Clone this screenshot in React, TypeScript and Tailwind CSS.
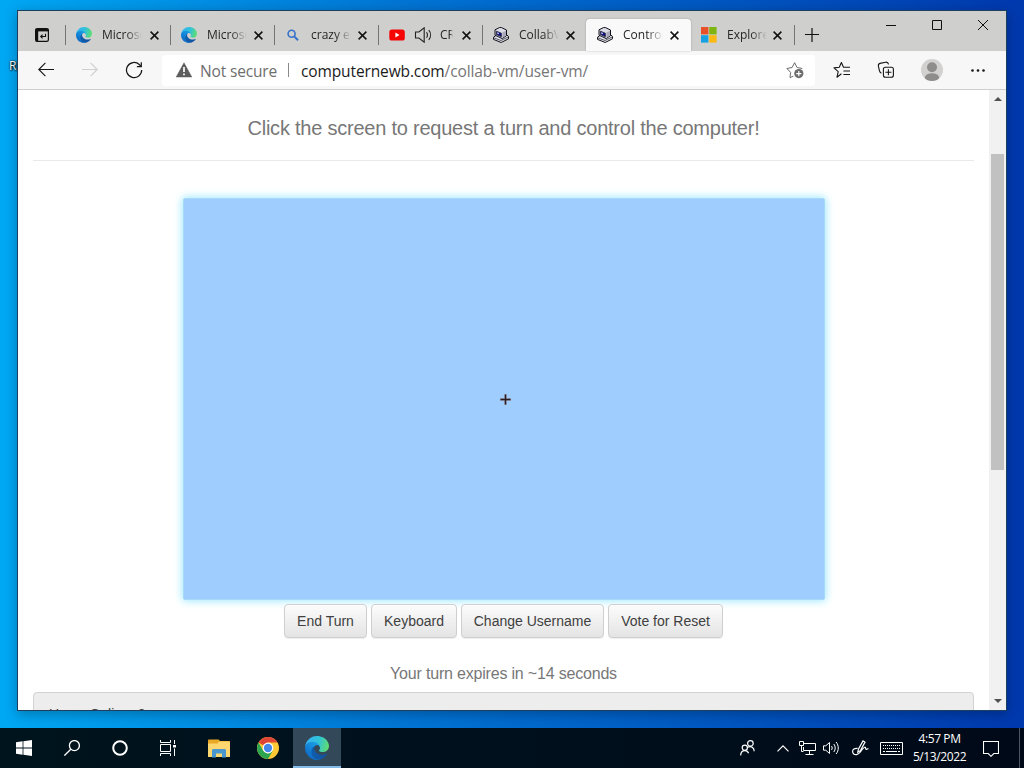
import type { ReactNode } from 'react';

type Tab = {
  title: string;
  icon: ReactNode;
  width: string;
  audible?: boolean;
  active?: boolean;
  divider?: boolean;
};

function EdgeLogo({ id, className }: { id: string; className: string }) {
  return (
    <svg className={className} viewBox="0 0 256 256">
      <defs>
        <linearGradient id={`${id}-a`} x1="60" y1="177" x2="236" y2="177" gradientUnits="userSpaceOnUse">
          <stop offset="0" stopColor="#0f5fae" />
          <stop offset="1" stopColor="#1250a0" />
        </linearGradient>
        <linearGradient id={`${id}-b`} x1="150" y1="90" x2="45" y2="220" gradientUnits="userSpaceOnUse">
          <stop offset="0" stopColor="#1b9de2" />
          <stop offset="0.4" stopColor="#158cdc" />
          <stop offset="1" stopColor="#0f6cc6" />
        </linearGradient>
        <linearGradient id={`${id}-c`} x1="20" y1="60" x2="250" y2="120" gradientUnits="userSpaceOnUse">
          <stop offset="0" stopColor="#35b4f1" />
          <stop offset="0.5" stopColor="#2fc2d8" />
          <stop offset="1" stopColor="#62de6e" />
        </linearGradient>
      </defs>
      <path fill={`url(#${id}-a)`} d="M231 190.5c-3.4 1.8-6.9 3.4-10.5 4.7a101.5 101.5 0 0 1-35.6 6.4c-47 0-87.9-32.3-87.9-73.8.1-11.4 6.4-21.8 16.4-27.2-42.5 1.8-53.4 46.1-53.4 72 0 73.4 67.6 80.8 82.2 80.8 7.9 0 19.7-2.3 26.8-4.6l1.3-.4a128.3 128.3 0 0 0 66.6-52.8 4 4 0 0 0-5.9-5.1z" />
      <path fill={`url(#${id}-b)`} d="M105.7 241.4a79.2 79.2 0 0 1-22.7-21.3 80.7 80.7 0 0 1 29.5-120c3.1-1.5 8.5-4.1 15.6-4a32.4 32.4 0 0 1 25.7 13 31.9 31.9 0 0 1 6.3 18.7c0-.2 24.5-79.6-80-79.6-43.9 0-80 41.7-80 78.2a130.2 130.2 0 0 0 12.1 56 128 128 0 0 0 156.4 67 75.5 75.5 0 0 1-62.8-8z" />
      <path fill={`url(#${id}-c)`} d="M152.3 148.9c-.8 1-3.3 2.5-3.3 5.7 0 2.6 1.7 5.1 4.7 7.2 14.4 10 41.5 8.7 41.6 8.7a59.5 59.5 0 0 0 30.3-8.3A61.4 61.4 0 0 0 256 109.3c.3-22.4-8-37.3-11.3-43.9C223.5 23.9 177.7 0 128 0A128 128 0 0 0 0 126.2c.5-36.5 36.8-66 80-66 3.5 0 23.5.3 42 10.1a72.6 72.6 0 0 1 30.9 29.3c6.1 10.6 7.2 24.1 7.2 29.5s-2.7 13.3-7.8 19.9z" />
    </svg>
  );
}

function SearchFavicon() {
  return (
    <svg className="w-4 h-4" viewBox="0 0 16 16" fill="none" stroke="#3672c9">
      <circle cx="6.600" cy="6.800" r="3.500" strokeWidth="1.600" />
      <path d="M9.200 9.400l3.800 3.800" strokeWidth="2" />
    </svg>
  );
}

function YoutubeFavicon() {
  return (
    <svg className="w-4 h-4" viewBox="0 0 16 16">
      <rect x="0.3" y="2.4" width="15.5" height="11.2" rx="2.6" fill="#f60505" />
      <path d="M6.4 5.6v4.8L10.5 8z" fill="#fff" />
    </svg>
  );
}

function ComputerFavicon() {
  return (
    <svg className="w-4 h-4" viewBox="0 0 16 16" strokeLinejoin="round">
      <path d="M.5 10.200L3 8.400l10.400-.8 2.100 1.800v2.400L8.200 15.500.5 12.400z" fill="#e2e2ea" stroke="#101018" strokeWidth="1" />
      <path d="M.8 10.800l7.200 2.700 7.400-3.600" fill="none" stroke="#4a4a58" strokeWidth="0.900" />
      <path d="M2 2.800L6.600.5l2 .1L13.500 3v5.600l-4.300 3L2 8.200z" fill="#dcdce6" stroke="#101018" strokeWidth="1" />
      <path d="M9.400 5.600L13 3.800v4.600l-3.600 2.400z" fill="#a9a9ba" />
      <path d="M3.400 4.200l5 2v3.600l-5-2.300z" fill="#10108c" stroke="#26263a" strokeWidth="0.800" />
      <path d="M4.200 5.200l1.700.7v1.300l-1.700-.7z" fill="#dfe4ff" />
    </svg>
  );
}

function MicrosoftFavicon() {
  return (
    <svg className="w-4 h-4" viewBox="0 0 16 16">
      <rect x="0" y="0" width="7.4" height="7.4" fill="#e8502a" />
      <rect x="8.2" y="0" width="7.4" height="7.4" fill="#7fb511" />
      <rect x="0" y="8.2" width="7.4" height="7.4" fill="#17a1e2" />
      <rect x="8.2" y="8.2" width="7.4" height="7.4" fill="#fcb913" />
    </svg>
  );
}

function SpeakerIcon() {
  return (
    <svg className="w-[18px] h-4" viewBox="0 0 18 16" fill="none" stroke="#222" strokeWidth="1.100">
      <path d="M1.500 5h3.400L10.200.8v14.400L4.900 11H1.500z" />
      <path d="M12.500 5.200c1.200 1.700 1.200 3.900 0 5.600M14.800 3.200c2.300 2.800 2.300 6.800 0 9.600" />
    </svg>
  );
}

const tabs: Tab[] = [
  { title: 'Microsoft', icon: <EdgeLogo id="tab1" className="w-4 h-4" />, width: 'w-[105px]', divider: true },
  { title: 'Microsoft', icon: <EdgeLogo id="tab2" className="w-4 h-4" />, width: 'w-[104px]', divider: true },
  { title: 'crazy error', icon: <SearchFavicon />, width: 'w-[104px]', divider: true },
  { title: 'CRAZY', icon: <YoutubeFavicon />, width: 'w-[104px]', audible: true, divider: true },
  { title: 'CollabVM', icon: <ComputerFavicon />, width: 'w-[104px]', divider: true },
  { title: 'Control', icon: <ComputerFavicon />, width: 'w-[105px]', active: true },
  { title: 'Explore', icon: <MicrosoftFavicon />, width: 'w-[103px]' },
];

const actions = [
  { label: 'End Turn', width: 'w-[83px]' },
  { label: 'Keyboard', width: 'w-[86px]' },
  { label: 'Change Username', width: 'w-[143px]' },
  { label: 'Vote for Reset', width: 'w-[115px]' },
];

function TabItem({ tab }: { tab: Tab }) {
  return (
    <div
      className={`relative flex items-center h-8 pr-[11px] shrink-0 ${tab.width} ${tab.active ? '-ml-px pl-[11px] bg-[#f9f9f9] rounded-t-[4px] shadow-[0_0_2px_rgba(0,0,0,0.25)]' : 'pl-[10px]'}`}
    >
      {tab.divider && <div className="absolute left-[-1px] top-[6px] w-px h-5 bg-[#747474]" />}
      <div className="shrink-0">{tab.icon}</div>
      {tab.audible && (
        <div className="ml-[9px] shrink-0">
          <SpeakerIcon />
        </div>
      )}
      <div
        className={`overflow-hidden whitespace-nowrap text-[12px] leading-4 text-[#262626] ${tab.audible ? 'ml-2 w-[13px] [mask-image:linear-gradient(to_right,#000_75%,transparent)]' : 'ml-[10px] w-[40px] [mask-image:linear-gradient(to_right,#000_60%,transparent)]'}`}
      >
        {tab.title}
      </div>
      <svg className="ml-auto mr-px w-[9px] h-[9px] shrink-0" viewBox="0 0 9 9" stroke="#111" strokeWidth="1.5">
        <path d="M.6.6l7.8 7.800M8.400.6L.6 8.400" />
      </svg>
    </div>
  );
}

function TabStrip() {
  return (
    <div className="flex h-10 bg-[#cfcfce] pt-2">
      <div className="flex w-12 h-8 items-center pl-[17px]">
        <svg className="w-[14px] h-[14px]" viewBox="0 0 14 14" fill="none" stroke="#111">
          <rect x="0.600" y="0.600" width="12.800" height="12.800" rx="1.600" strokeWidth="1.200" />
          <path d="M.6 2.200h12.800" strokeWidth="2.400" />
          <path d="M2 3v10.400" strokeWidth="2.400" />
          <path d="M10.500 5.800v2.700H5.800M7.600 6.600L5.700 8.500l1.900 1.900" strokeWidth="1.100" />
        </svg>
      </div>
      {tabs.map((tab, i) => (
        <TabItem key={i} tab={tab} />
      ))}
      <div className="h-5 mt-[6px] w-px bg-[#747474]" />
      <svg className="w-[14px] h-[14px] mt-[9px] ml-[10px]" viewBox="0 0 14 14" stroke="#111" strokeWidth="1.2">
        <path d="M7 0v14M0 6.500h14" />
      </svg>
      {/* Window controls */}
      <div className="flex ml-auto pr-[18px] gap-[36px] mt-[1px] h-[10px]">
        <svg className="w-[10px] h-[10px]" viewBox="0 0 10 10" stroke="#111">
          <path d="M0 5.5h10" />
        </svg>
        <svg className="w-[10px] h-[10px]" viewBox="0 0 10 10" fill="none" stroke="#111">
          <path d="M.5.5h9v9h-9z" />
        </svg>
        <svg className="w-[10px] h-[10px]" viewBox="0 0 10 10" stroke="#111">
          <path d="M0 0l10 10M10 0L0 10" />
        </svg>
      </div>
    </div>
  );
}

function Toolbar() {
  return (
    <div className="flex items-center h-[39px] bg-[#f7f7f7] border-b border-[#cfcfcf]">
      <div className="flex items-center w-36 pl-5 shrink-0">
        <svg className="w-4 h-4" viewBox="0 0 16 16" fill="none" stroke="#161616" strokeWidth="1.1">
          <path d="M16 7.500H.8M7.400.9L.8 7.500l6.600 6.600" />
        </svg>
        <svg className="w-4 h-4 ml-7" viewBox="0 0 16 16" fill="none" stroke="#cfcfcf" strokeWidth="1.1">
          <path d="M0 7.500h15.200M8.600.9l6.600 6.600-6.600 6.600" />
        </svg>
        <svg className="w-[18px] h-[18px] ml-[27px]" viewBox="0 0 18 18" fill="none" stroke="#161616" strokeWidth="1.2">
          <path d="M16.7 9a7.6 7.6 0 1 1-2.4-5.5l1.8 1.8" />
          <path d="M16.3 1.2v4.5h-4.4" />
        </svg>
      </div>
      {/* Address bar */}
      <div className="flex items-center w-[653px] h-[31px] bg-white rounded-[3px] pl-[14px] shrink-0 text-[15.5px] leading-5 whitespace-nowrap">
        <svg className="w-4 h-4" viewBox="0 0 16 16">
          <path d="M8 .8L15.8 15H.2z" fill="#5d5d5d" stroke="#5d5d5d" strokeWidth="0.5" strokeLinejoin="round" />
          <path d="M8 5v5M8 11.4v1.8" stroke="#fff" strokeWidth="1.7" />
        </svg>
        <span className="ml-2 w-[88px] pt-px text-[#6e6e6e] tracking-[-0.15px]">Not secure</span>
        <div className="w-px h-[14px] bg-[#8a8a8a]" />
        <span className="ml-3 pt-px text-[#1b1b1b] tracking-[-0.12px]">
          computernewb.com<span className="text-[#767676]">/collab-vm/user-vm/</span>
        </span>
        <svg className="w-[18px] h-[18px] ml-auto mr-[11px]" viewBox="0 0 18 18" fill="none">
          <path d="M7.4 15.2L4 16.6l.6-5.2L.9 7.5l5.2-1L8.6 1.7l2.5 4.8 5.2 1" stroke="#6b6b6b" strokeLinejoin="round" />
          <circle cx="12.8" cy="12.6" r="4.6" fill="#6b6b6b" />
          <path d="M12.8 10v5.2M10.2 12.6h5.2" stroke="#fff" strokeWidth="1.2" />
        </svg>
      </div>
      <div className="flex items-center pl-[18px]">
        <svg className="w-[18px] h-[18px]" viewBox="0 0 18 18" fill="none" stroke="#161616" strokeWidth="1.1" strokeLinejoin="round">
          <path d="M8.4 12.800L4 16.200l1.200-5.600L1 6.900l5.300-.7L8.400 1.600l2.100 4.600H17M10.400 10H17M10.400 13.500H17" />
        </svg>
        <svg className="w-[18px] h-[18px] ml-[26px]" viewBox="0 0 18 18" fill="none" stroke="#161616" strokeWidth="1.1">
          <rect x="6.4" y="6.2" width="10" height="10" rx="2" />
          <path d="M11.400 8.200v6M8.400 11.200h6M4.400 12.200c-1.400-.6-1.800-1.400-2-2.600L1.400 5.200C1.100 3.600 1.800 2.700 3 2.400l5.600-1.200c1.600-.3 2.600.6 3 2.200" />
        </svg>
        <svg className="w-[22px] h-[22px] ml-[26px]" viewBox="0 0 22 22">
          <defs>
            <clipPath id="avatar">
              <circle cx="11" cy="11" r="11" />
            </clipPath>
          </defs>
          <circle cx="11" cy="11" r="11" fill="#d3d1d0" />
          <g clipPath="url(#avatar)" fill="#8f8d8c">
            <circle cx="11" cy="8.2" r="5" />
            <ellipse cx="11" cy="18.8" rx="7.2" ry="4.6" />
          </g>
        </svg>
        <svg className="w-[14px] h-[3px] ml-7" viewBox="0 0 14 3" fill="#161616">
          <circle cx="1.5" cy="1.5" r="1.3" />
          <circle cx="7" cy="1.5" r="1.3" />
          <circle cx="12.5" cy="1.5" r="1.3" />
        </svg>
      </div>
    </div>
  );
}

function Page() {
  return (
    <div className="flex h-[620px] bg-white font-['Liberation_Sans',sans-serif]">
      <div className="w-[971px] px-[15px] overflow-hidden">
        <h4 className="mt-[26px] text-center text-[20px] leading-6 text-[#777] whitespace-nowrap tracking-[-0.23px]">
          Click the screen to request a turn and control the computer!
        </h4>
        <hr className="mt-5 border-0 h-px bg-[#e9e9e9]" />
        {/* Remote display */}
        <div className="mt-[37px] mx-auto flex items-center justify-center w-[642px] h-[402px] rounded-[2px] border border-[#a6daf8] bg-[#9fcdfe] shadow-[0_0_8px_1px_#9fe9ff]">
          <svg className="w-[11px] h-[11px] mt-px ml-[3px]" viewBox="0 0 11 11">
            <path d="M5.5 0v11M0 5.5h11" stroke="#8a6658" strokeWidth="2.4" opacity="0.5" />
            <path d="M5.5 0.500v10M.5 5.500h10" stroke="#2c1c20" strokeWidth="1.400" />
          </svg>
        </div>
        <div className="mt-1 flex justify-center gap-1">
          {actions.map((action) => (
            <button
              key={action.label}
              className={`${action.width} h-[34px] rounded-[4px] border border-[#cfcfcf] bg-linear-to-b from-[#fcfcfc] to-[#e4e4e4] text-[14px] leading-5 text-[#404040] shadow-[inset_0_1px_0_#fff,0_1px_1px_rgba(0,0,0,0.07)] whitespace-nowrap`}
            >
              {action.label}
            </button>
          ))}
        </div>
        <p className="mt-[26px] text-center text-[16px] leading-5 text-[#777] tracking-[-0.19px]">Your turn expires in ~14 seconds</p>
        <div className="mt-2 h-10 rounded-t-[4px] border border-[#d2d2d2] bg-[#ededed] px-[15px] pt-[11px] text-[14px] leading-5 text-[#444]">
          Users Online: 3
        </div>
      </div>
      {/* Scrollbar */}
      <div className="flex flex-col items-center w-[17px] bg-[#f1f1f1]">
        <svg className="w-2 h-1 mt-[7px]" viewBox="0 0 8 4" fill="#505050">
          <path d="M4 0l4 4H0z" />
        </svg>
        <div className="mt-[53px] w-[13px] h-[316px] bg-[#c1c1c1]" />
        <svg className="w-2 h-1 mt-auto mb-[7px]" viewBox="0 0 8 4" fill="#505050">
          <path d="M4 4L0 0h8z" />
        </svg>
      </div>
    </div>
  );
}

function Taskbar() {
  return (
    <div className="relative flex h-10 bg-linear-to-r from-[#00141d] via-[#00101d] to-[#000918] text-white">
      <div className="flex w-12 items-center justify-center">
        <svg className="w-4 h-4" viewBox="0 0 16 16" fill="#fff">
          <path d="M0 2.2l6.6-.9v6.3H0zM7.4 1.2L16 0v7.6H7.4zM0 8.4h6.6v6.3L0 13.8zM7.4 8.4H16V16l-8.6-1.2z" />
        </svg>
      </div>
      <div className="flex w-12 items-center justify-center">
        <svg className="w-4 h-4" viewBox="0 0 16 16" fill="none" stroke="#fff" strokeWidth="1.3">
          <circle cx="10.4" cy="5.6" r="5" />
          <path d="M6.8 9.2L.4 15.6" />
        </svg>
      </div>
      <div className="flex w-12 items-center justify-center">
        <svg className="w-4 h-4" viewBox="0 0 16 16" fill="none" stroke="#fff" strokeWidth="2">
          <circle cx="8" cy="8" r="6.8" />
        </svg>
      </div>
      <div className="flex w-12 items-center justify-center">
        <svg className="w-4 h-4" viewBox="0 0 16 16" fill="none" stroke="#fff" strokeWidth="1">
          <path d="M.5 0v2.500h10V0M.5 16v-2.500h10V16M.5 4.500h10v7H.5zM14.500 0v4M14.500 8.500V16" />
          <path d="M13 5h3v2.500h-3z" fill="#fff" stroke="none" />
        </svg>
      </div>
      <div className="flex w-[53px] items-center justify-center">
        <svg className="w-[22px] h-[19px]" viewBox="0 0 22 19">
          <path d="M0 1.4C0 .8.4.4 1 .4h9.600L12 2h9c.6 0 1 .4 1 1v15H0z" fill="#e9a825" />
          <path d="M0 4.400h9.600L11 2.600h11V18H0z" fill="#fcd66f" />
          <path d="M4 18.6v-7c0-.9.6-1.5 1.5-1.5h11c.9 0 1.5.6 1.5 1.5v7h-4v-4H8v4z" fill="#4a97cf" />
        </svg>
      </div>
      <div className="flex w-12 items-center justify-center pr-[2px]">
        <svg className="w-[22px] h-[22px]" viewBox="0 0 22 22">
          <circle cx="11" cy="11" r="11" fill="#fcc934" />
          <path d="M11 11L1.5 5.5A11 11 0 0 1 20.5 5.5H11z" fill="#e04436" />
          <path d="M1.5 5.5A11 11 0 0 0 11 22l4.8-8.3-4.8 2.8-4.8-2.8z" fill="#2da44f" />
          <circle cx="11" cy="11" r="5.4" fill="#fff" />
          <circle cx="11" cy="11" r="4.2" fill="#4587ea" />
        </svg>
      </div>
      <div className="flex w-12 items-center justify-center bg-[#33495a] border-b-2 border-[#83bce9]">
        <EdgeLogo id="taskbar" className="w-6 h-6 mt-[2px]" />
      </div>

      {/* Notification area */}
      <div className="ml-auto flex items-center">
        <svg className="w-[15px] h-4" viewBox="0 0 15 16" fill="none" stroke="#fff" strokeWidth="1.200">
          <circle cx="10.400" cy="3.400" r="2.800" />
          <circle cx="4.800" cy="7.800" r="2.600" />
          <path d="M.6 15.400c.2-3 1.800-4.800 4.200-4.800 2 0 3.200 1 3.800 2.600M7.600 7.200c3.600-1.800 6.600.6 6.600 4" />
        </svg>
        <svg className="w-3 h-[7px] ml-[22px]" viewBox="0 0 12 7" fill="none" stroke="#fff" strokeWidth="1.200">
          <path d="M.5 6.400L6 .9l5.500 5.500" />
        </svg>
        <svg className="w-[17px] h-[14px] ml-[10px]" viewBox="0 0 17 14" fill="none" stroke="#fff">
          <path d="M5 2.500h11.500v7H4.500V6M10.500 9.500v4M6.500 13.500h8M.5.5h4v4h-4zM2.500 4.500v6h2" />
        </svg>
        <svg className="w-[17px] h-[14px] ml-[7px]" viewBox="0 0 17 14" fill="none" stroke="#fff">
          <path d="M.5 4.800h2.300L6.500 1.500v11L2.800 9.200H.5zM8.500 5c.9 1.200.9 2.800 0 4M10.800 3c1.900 2.400 1.900 5.600 0 8M13.100 1c2.900 3.600 2.900 8.400 0 12" />
        </svg>
        <svg className="w-[17px] h-4 ml-3" viewBox="0 0 17 16" fill="none" stroke="#fff" strokeWidth="1.200">
          <path d="M5.600 8.400C2.400 8 .6 9.600.6 11.600s1.600 3.200 3.800 3c3-.4 4.400-3.400 6.200-5.800M5.800 12.200l.6-3L11 .9l2 1.200-4.400 8.300zM10.600 9c1.600-2 3-2.400 3-.8 0 1.200 1 1.600 2.800.4" />
        </svg>
        <svg className="w-[23px] h-[13px] ml-[11px]" viewBox="0 0 23 13" fill="none" stroke="#fff">
          <path d="M.5.5h22v12H.5z" />
          <path d="M3 3.500h17M3 6.500h17" strokeDasharray="1 1" strokeWidth="1.200" />
          <path d="M3 9.500h2M6 9.500h11M18 9.500h2" />
        </svg>
        <div className="w-[73px] text-center text-[12px] leading-[18px] tracking-[-0.4px] whitespace-nowrap">
          <div>4:57 PM</div>
          <div>5/13/2022</div>
        </div>
        <svg className="w-4 h-4 ml-[7px] mt-[1px]" viewBox="0 0 16 16" fill="none" stroke="#fff" strokeWidth="1.100">
          <path d="M.5.5h15v12h-4.700L8 15.300 5.200 12.500H.5z" />
        </svg>
        <div className="ml-5 mr-1 w-px h-10 bg-[#4a5560]" />
      </div>
    </div>
  );
}

export default function App() {
  return (
    <div className="relative flex flex-col justify-end w-[1024px] h-[768px] overflow-hidden bg-linear-to-r from-[#00a8f4] via-[#0274d4] via-40% to-[#0038ae] font-['Open_Sans','Noto_Sans',sans-serif]">
      {/* Desktop icon label behind the window */}
      <div className="absolute left-[9px] top-[58px] text-[12px] leading-4 text-white [text-shadow:1px_1px_2px_#000,0_0_2px_#000]">Recycle Bin</div>
      <div className="absolute left-[17px] top-[10px] w-[990px] border border-[#1c3f5f] shadow-[0_3px_12px_rgba(0,0,0,0.28)]">
        <TabStrip />
        <Toolbar />
        <Page />
      </div>
      <Taskbar />
    </div>
  );
}
